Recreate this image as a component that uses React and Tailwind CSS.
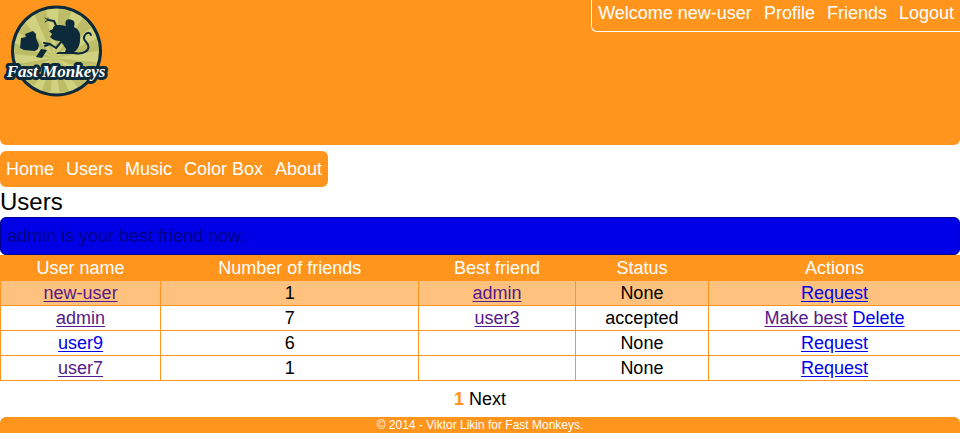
const topLinks = ["Profile", "Friends", "Logout"];
const navLinks = ["Home", "Users", "Music", "Color Box", "About"];

const rows = [
  { name: "new-user", visited: true, friends: 1, best: "admin", status: "None", own: true, actions: [{ label: "Request", visited: false }] },
  { name: "admin", visited: true, friends: 7, best: "user3", status: "accepted", actions: [{ label: "Make best", visited: true }, { label: "Delete", visited: false }] },
  { name: "user9", visited: false, friends: 6, best: "", status: "None", actions: [{ label: "Request", visited: false }] },
  { name: "user7", visited: true, friends: 1, best: "", status: "None", actions: [{ label: "Request", visited: false }] },
];

const rays = Array.from({ length: 12 }, (_, i) => {
  const a = (i * Math.PI) / 6 + 0.1;
  const b = a + Math.PI / 12;
  return `M54 58L${54 + 70 * Math.cos(a)} ${58 + 70 * Math.sin(a)}L${54 + 70 * Math.cos(b)} ${58 + 70 * Math.sin(b)}Z`;
});

function Logo() {
  return (
    <svg viewBox="0 0 112 102" className="block h-[102px] w-28" role="img" aria-label="Fast Monkeys">
      <defs>
        <clipPath id="disc">
          <circle cx="56.5" cy="51" r="42" />
        </clipPath>
      </defs>
      <circle cx="56.5" cy="51" r="45.5" fill="#0c2a3a" />
      <circle cx="56.5" cy="51" r="42.5" fill="#d0d27f" />
      <g clipPath="url(#disc)" fill="#bdbd67">
        {rays.map((d) => (
          <path key={d} d={d} />
        ))}
      </g>
      <g fill="#0c2a3a">
        <path d="M21 38L26 37L25 34L33 31L36 34L36 38L39 45L38 49L35 51L24 50L20 48Z" />
        <path d="M41 49L47 50L42 58L36 57Z" />
        <path d="M50 37L52 34L49 31L53 29C53 25 58 24 66 26C64 20 68 18 72 20C75 21 75 24 74 27C79 29 81 34 80 40C80 46 77 50 74 52L77 53V54H56L58 52L65 52L66 49L62 43L60 41C56 41 53 40 50 37Z" />
      </g>
      <g fill="none" stroke="#0c2a3a" strokeLinecap="round" strokeLinejoin="round">
        <path strokeWidth="2" d="M57 28L54 21L48 20" />
        <path strokeWidth="1" d="M48 20L45 18M48 20L45 22M48 20L48 18" />
        <path strokeWidth="2" d="M62 41L56 48L50 44L44 43M50 44L45 46" />
        <path strokeWidth="2" d="M74 53C84 55 90 50 88 45C86 41 82 39 85 35C87 32 90 32 91 35" />
      </g>
      <text
        x="56"
        y="77"
        textAnchor="middle"
        className="font-['Liberation_Serif',serif] text-[17px] font-bold italic"
        fill="#fff"
        stroke="#0c2a3a"
        strokeWidth="6"
        strokeLinejoin="round"
        paintOrder="stroke"
      >
        Fast Monkeys
      </text>
    </svg>
  );
}

function TextLink({ visited, children }) {
  return (
    <a href="#" className={`underline underline-offset-2 ${visited ? "text-[#551a8b]" : "text-[#0000ee]"}`}>
      {children}
    </a>
  );
}

export default function App() {
  return (
    <div className="bg-white font-['Liberation_Sans',Arial,sans-serif] text-lg leading-6 text-black">
      <header className="flex min-h-[145px] items-start justify-between rounded-b-md bg-[#ff951c]">
        <a href="#">
          <Logo />
        </a>
        <div className="flex gap-3 rounded-bl-md border-b border-l border-white px-1.5 pt-px pb-1.5 text-white">
          <span>Welcome new-user</span>
          {topLinks.map((label) => (
            <a key={label} href="#">{label}</a>
          ))}
        </div>
      </header>

      <nav className="mt-1.5 flex w-fit gap-3 rounded-md bg-[#ff951c] p-1.5 text-white">
        {navLinks.map((label) => (
          <a key={label} href="#">{label}</a>
        ))}
      </nav>

      <main>
        <h1 className="text-2xl leading-[30px]">Users</h1>
        <p className="rounded-md border border-[#00008b] bg-[#0000e6] p-1.5 text-[#00008b]">admin is your best friend now.</p>
        <table className="w-full border-collapse text-center">
          <thead className="bg-[#ff951c] text-white">
            <tr>
              <th className="w-[16.7%] border border-[#ff951c] p-0 font-normal">User name</th>
              <th className="w-[26.9%] border border-[#ff951c] p-0 font-normal">Number of friends</th>
              <th className="w-[16.3%] border border-[#ff951c] p-0 font-normal">Best friend</th>
              <th className="w-[13.9%] border border-[#ff951c] p-0 font-normal">Status</th>
              <th className="border border-r-0 border-[#ff951c] p-0 font-normal">Actions</th>
            </tr>
          </thead>
          <tbody>
            {rows.map((row) => (
              <tr key={row.name} className={row.own ? "bg-[#ffc27e]" : ""}>
                <td className="border border-[#ff951c] p-0">
                  <TextLink visited={row.visited}>{row.name}</TextLink>
                </td>
                <td className="border border-[#ff951c] p-0">{row.friends}</td>
                <td className="border border-[#ff951c] p-0">{row.best && <TextLink visited>{row.best}</TextLink>}</td>
                <td className="border border-[#ff951c] p-0">{row.status}</td>
                <td className="border border-r-0 border-[#ff951c] p-0">
                  <span className="inline-flex gap-[5px]">
                    {row.actions.map((action) => (
                      <TextLink key={action.label} visited={action.visited}>{action.label}</TextLink>
                    ))}
                  </span>
                </td>
              </tr>
            ))}
          </tbody>
        </table>
        <div className="flex justify-center gap-[5px] p-1.5">
          <strong className="text-[#ff951c]">1</strong>
          <a href="#">Next</a>
        </div>
      </main>

      <footer className="rounded-t-md bg-[#ff951c] text-center text-xs text-white">© 2014 - Viktor Likin for Fast Monkeys.</footer>
    </div>
  );
}
